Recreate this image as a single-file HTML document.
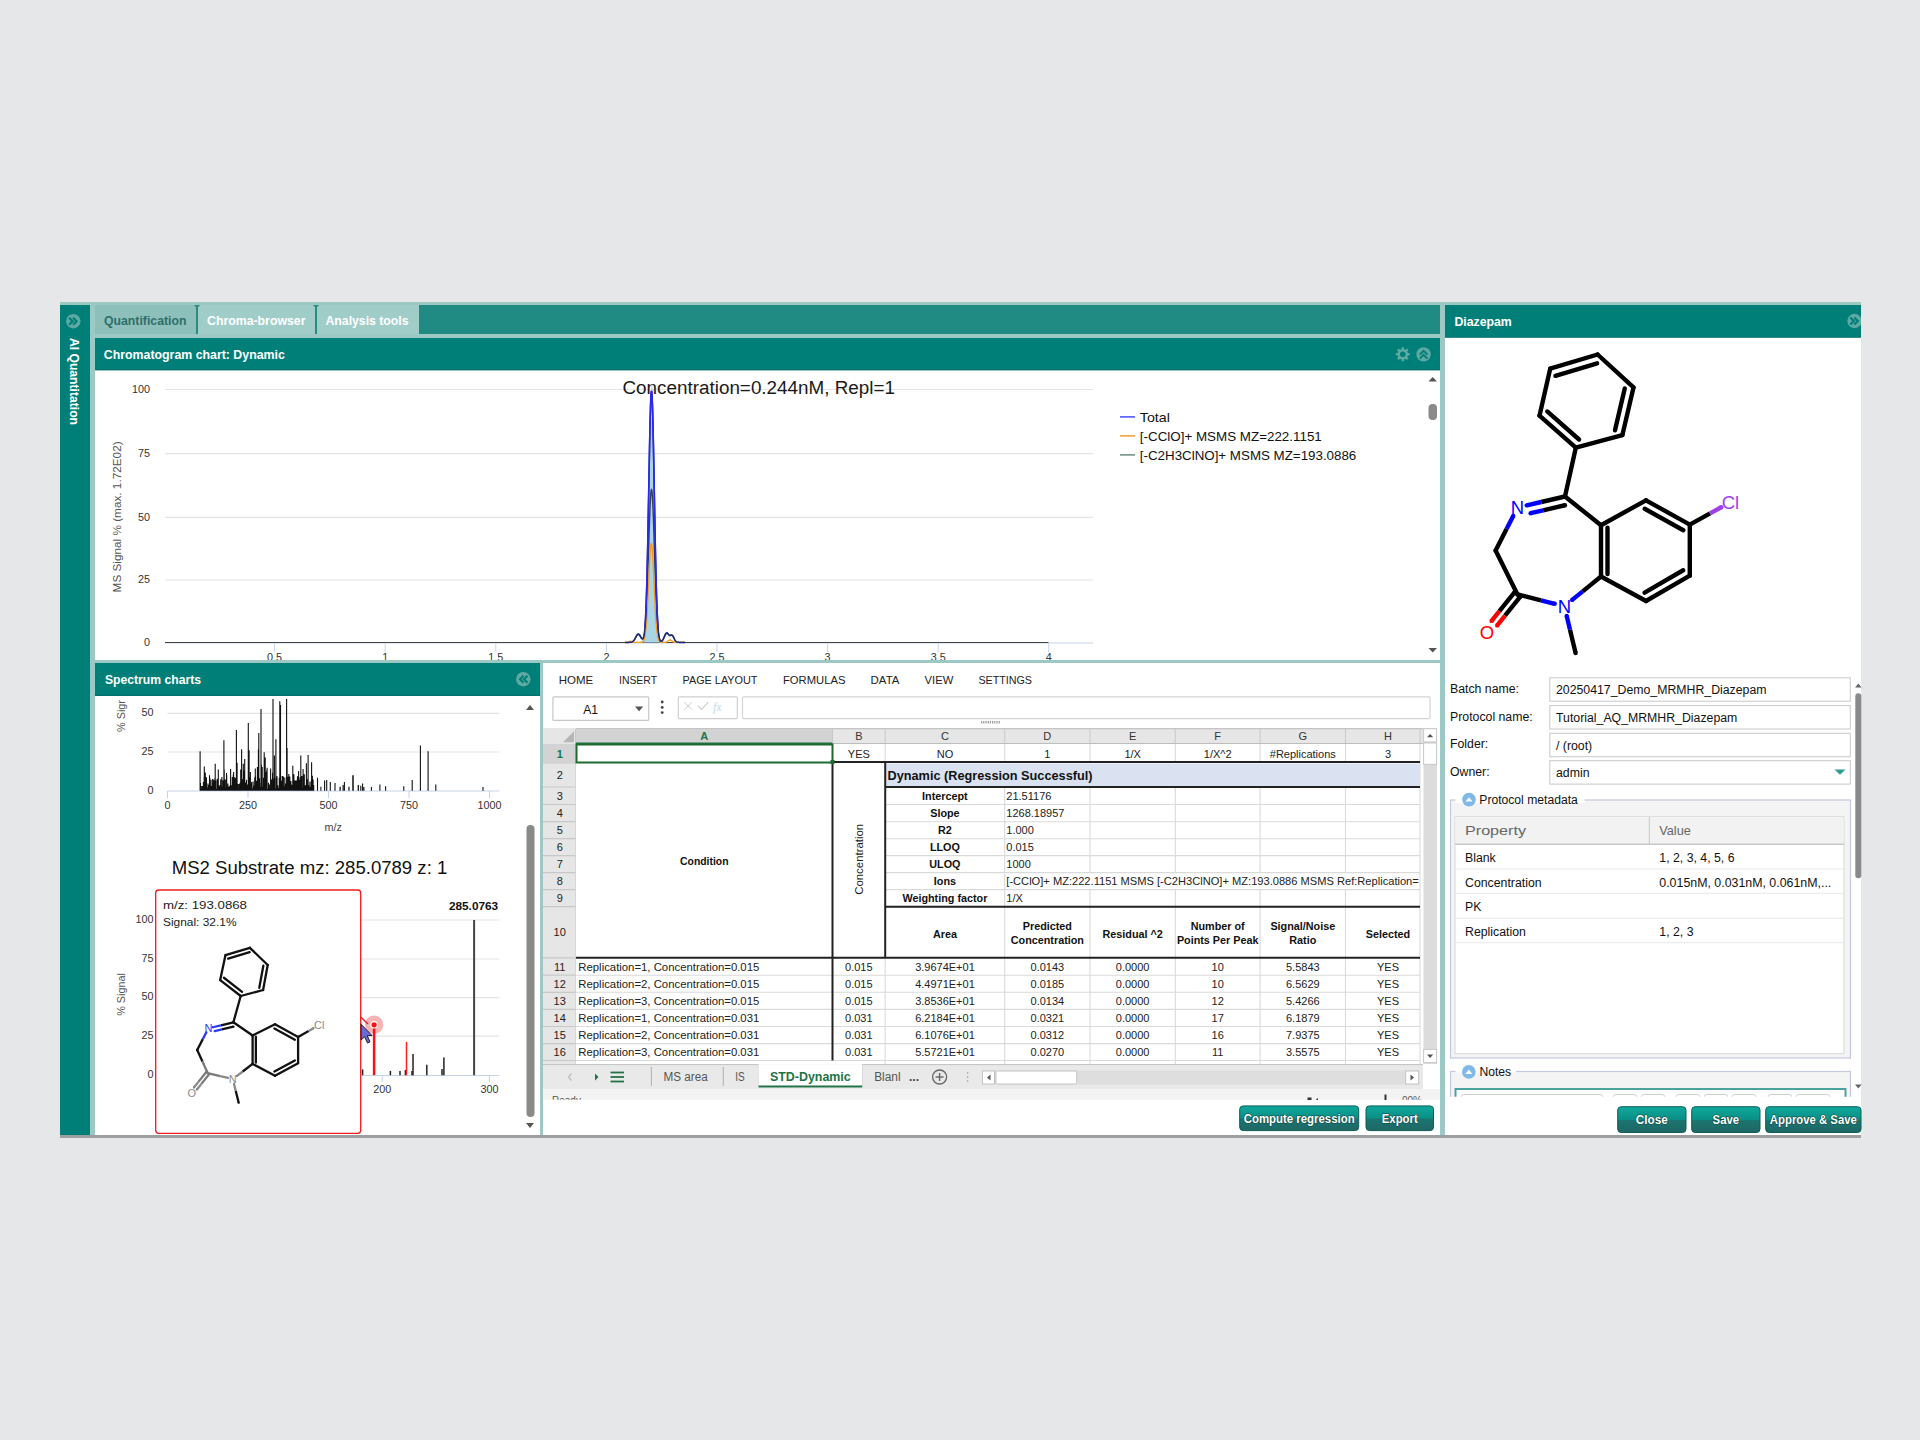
<!DOCTYPE html>
<html><head><meta charset="utf-8">
<style>
*{margin:0;padding:0;box-sizing:border-box}
html,body{width:1920px;height:1440px;overflow:hidden;background:#e6e7e9;font-family:"Liberation Sans",sans-serif}
svg{position:absolute;left:0;top:0}
</style></head><body>
<svg width="1920" height="1440" viewBox="0 0 1920 1440" font-family="Liberation Sans, sans-serif"><rect x="60" y="1135" width="1801" height="3" fill="#9d9ea0" />
<rect x="60" y="302" width="1801" height="833" fill="#9dc9c5" />
<rect x="60" y="305" width="30" height="830" fill="#007f79" />
<circle cx="73.3" cy="321.2" r="7.2" fill="#5fa9a3" stroke="none" stroke-width="1" />
<path d="M69.1,317.7 L72.6,321.2 L69.1,324.7 M73.1,317.7 L76.6,321.2 L73.1,324.7" stroke="#007f79" stroke-width="2.2" fill="none" />
<text x="0" y="0" font-size="12.3" fill="#fff" font-weight="bold" textLength="87" lengthAdjust="spacingAndGlyphs" transform="translate(69.5,338) rotate(90)">AI Quantitation</text>
<rect x="95" y="305" width="1345" height="29" fill="#1f8b83" />
<rect x="95" y="305" width="101" height="29" fill="#8ec0bb" />
<rect x="198" y="305" width="117" height="29" fill="#a1cdc9" />
<rect x="317" y="305" width="102" height="29" fill="#a1cdc9" />
<rect x="196" y="305" width="2" height="29" fill="#2b8a83" />
<rect x="315" y="305" width="2" height="29" fill="#2b8a83" />
<rect x="194.5" y="305" width="5" height="1.5" fill="#2b8a83" />
<rect x="313.5" y="305" width="5" height="1.5" fill="#2b8a83" />
<text x="104" y="325" font-size="12.3" fill="#2c6f6a" font-weight="bold" textLength="82.5" lengthAdjust="spacingAndGlyphs" >Quantification</text>
<text x="207" y="325" font-size="12.3" fill="#fff" font-weight="bold" textLength="98.5" lengthAdjust="spacingAndGlyphs" >Chroma-browser</text>
<text x="325.5" y="325" font-size="12.3" fill="#fff" font-weight="bold" textLength="83" lengthAdjust="spacingAndGlyphs" >Analysis tools</text>
<rect x="95" y="338" width="1345" height="32.5" fill="#007f79" />
<line x1="95" y1="369.8" x2="1440" y2="369.8" stroke="#006b65" stroke-width="1" />
<text x="103.8" y="358.5" font-size="12.3" fill="#fff" font-weight="bold" textLength="181" lengthAdjust="spacingAndGlyphs" >Chromatogram chart: Dynamic</text>
<line x1="1405.8" y1="354.2" x2="1409.8" y2="354.2" stroke="#5fa9a3" stroke-width="2.3" />
<line x1="1404.92" y1="356.321" x2="1407.75" y2="359.15" stroke="#5fa9a3" stroke-width="2.3" />
<line x1="1402.8" y1="357.2" x2="1402.8" y2="361.2" stroke="#5fa9a3" stroke-width="2.3" />
<line x1="1400.68" y1="356.321" x2="1397.85" y2="359.15" stroke="#5fa9a3" stroke-width="2.3" />
<line x1="1399.8" y1="354.2" x2="1395.8" y2="354.2" stroke="#5fa9a3" stroke-width="2.3" />
<line x1="1400.68" y1="352.079" x2="1397.85" y2="349.25" stroke="#5fa9a3" stroke-width="2.3" />
<line x1="1402.8" y1="351.2" x2="1402.8" y2="347.2" stroke="#5fa9a3" stroke-width="2.3" />
<line x1="1404.92" y1="352.079" x2="1407.75" y2="349.25" stroke="#5fa9a3" stroke-width="2.3" />
<circle cx="1402.8" cy="354.2" r="5.3" fill="#5fa9a3" stroke="none" stroke-width="1" />
<circle cx="1402.8" cy="354.2" r="2.8" fill="#007f79" stroke="none" stroke-width="1" />
<circle cx="1423.6" cy="354.4" r="7.2" fill="#5fa9a3" stroke="none" stroke-width="1" />
<path d="M1419.8,354.59999999999997 L1423.6,350.79999999999995 L1427.3999999999999,354.59999999999997 M1419.8,358.59999999999997 L1423.6,354.79999999999995 L1427.3999999999999,358.59999999999997" stroke="#007f79" stroke-width="2" fill="none" />
<rect x="95" y="370.5" width="1345" height="289.5" fill="#fff" />
<line x1="165" y1="389.5" x2="1093" y2="389.5" stroke="#e4e4e4" stroke-width="1.2" />
<text x="150" y="392.7" font-size="10.8" fill="#333" text-anchor="end" >100</text>
<line x1="165" y1="453.6" x2="1093" y2="453.6" stroke="#e4e4e4" stroke-width="1.2" />
<text x="150" y="456.8" font-size="10.8" fill="#333" text-anchor="end" >75</text>
<line x1="165" y1="517.3" x2="1093" y2="517.3" stroke="#e4e4e4" stroke-width="1.2" />
<text x="150" y="520.5" font-size="10.8" fill="#333" text-anchor="end" >50</text>
<line x1="165" y1="580" x2="1093" y2="580" stroke="#e4e4e4" stroke-width="1.2" />
<text x="150" y="583.2" font-size="10.8" fill="#333" text-anchor="end" >25</text>
<text x="150" y="645.7" font-size="10.8" fill="#333" text-anchor="end" >0</text>
<text x="0" y="0" font-size="10.8" fill="#555" text-anchor="middle" textLength="151" lengthAdjust="spacingAndGlyphs" transform="translate(121.3,516.9) rotate(-90)">MS Signal % (max. 1.72E02)</text>
<line x1="165" y1="643" x2="1093" y2="643" stroke="#c5d3ea" stroke-width="1" />
<line x1="165" y1="642.5" x2="1048.5" y2="642.5" stroke="#444" stroke-width="1.2" />
<clipPath id="chclip"><rect x="95" y="370.5" width="1345" height="289.5"/></clipPath>
<line x1="274.6" y1="643.5" x2="274.6" y2="652" stroke="#c5d3ea" stroke-width="1" />
<text x="274.6" y="660.6" font-size="10.8" fill="#333" text-anchor="middle" clip-path="url(#chclip)">0.5</text>
<line x1="385.2" y1="643.5" x2="385.2" y2="652" stroke="#c5d3ea" stroke-width="1" />
<text x="385.2" y="660.6" font-size="10.8" fill="#333" text-anchor="middle" clip-path="url(#chclip)">1</text>
<line x1="495.8" y1="643.5" x2="495.8" y2="652" stroke="#c5d3ea" stroke-width="1" />
<text x="495.8" y="660.6" font-size="10.8" fill="#333" text-anchor="middle" clip-path="url(#chclip)">1.5</text>
<line x1="606.4" y1="643.5" x2="606.4" y2="652" stroke="#c5d3ea" stroke-width="1" />
<text x="606.4" y="660.6" font-size="10.8" fill="#333" text-anchor="middle" clip-path="url(#chclip)">2</text>
<line x1="717" y1="643.5" x2="717" y2="652" stroke="#c5d3ea" stroke-width="1" />
<text x="717" y="660.6" font-size="10.8" fill="#333" text-anchor="middle" clip-path="url(#chclip)">2.5</text>
<line x1="827.6" y1="643.5" x2="827.6" y2="652" stroke="#c5d3ea" stroke-width="1" />
<text x="827.6" y="660.6" font-size="10.8" fill="#333" text-anchor="middle" clip-path="url(#chclip)">3</text>
<line x1="938.2" y1="643.5" x2="938.2" y2="652" stroke="#c5d3ea" stroke-width="1" />
<text x="938.2" y="660.6" font-size="10.8" fill="#333" text-anchor="middle" clip-path="url(#chclip)">3.5</text>
<line x1="1048.8" y1="643.5" x2="1048.8" y2="652" stroke="#c5d3ea" stroke-width="1" />
<text x="1048.8" y="660.6" font-size="10.8" fill="#333" text-anchor="middle" clip-path="url(#chclip)">4</text>
<text x="622.5" y="394.2" font-size="18" fill="#1a1a1a" textLength="272.5" lengthAdjust="spacingAndGlyphs" >Concentration=0.244nM, Repl=1</text>
<path d="M640.00,641.65 L640.50,641.49 L641.00,641.28 L641.50,641.03 L642.00,640.71 L642.50,640.28 L643.00,639.67 L643.50,638.77 L644.00,637.41 L644.50,635.31 L645.00,632.12 L645.50,627.35 L646.00,620.41 L646.50,610.65 L647.00,597.45 L647.50,580.32 L648.00,559.09 L648.50,534.03 L649.00,506.00 L649.50,476.46 L650.00,447.45 L650.50,421.33 L651.00,400.50 L651.50,387.05 L652.00,382.40 L652.50,387.05 L653.00,400.50 L653.50,421.33 L654.00,447.45 L654.50,476.46 L655.00,506.00 L655.50,534.03 L656.00,559.09 L656.50,580.32 L657.00,597.45 L657.50,610.65 L658.00,620.41 L658.50,627.35 L659.00,632.12 L659.50,635.31 L660.00,637.41 L660.50,638.77 L661.00,639.67 L661.50,640.28 L662.00,640.71 L662.50,641.03 L663.00,641.28 L663.50,641.49 L664.00,641.65 L664,642.4 L640,642.4 Z" stroke="none" stroke-width="1" fill="#a9d6e4" />
<path d="M625.00,642.40 L625.50,642.40 L626.00,642.40 L626.50,642.40 L627.00,642.40 L627.50,642.40 L628.00,642.40 L628.50,642.39 L629.00,642.39 L629.50,642.37 L630.00,642.35 L630.50,642.31 L631.00,642.24 L631.50,642.14 L632.00,641.98 L632.50,641.74 L633.00,641.40 L633.50,640.94 L634.00,640.36 L634.50,639.65 L635.00,638.82 L635.50,637.92 L636.00,636.99 L636.50,636.10 L637.00,635.34 L637.50,634.77 L638.00,634.45 L638.50,634.42 L639.00,634.67 L639.50,635.18 L640.00,635.88 L640.50,636.69 L641.00,637.52 L641.50,638.25 L642.00,638.78 L642.50,638.99 L643.00,638.75 L643.50,637.90 L644.00,636.26 L644.50,633.60 L645.00,629.67 L645.50,624.18 L646.00,616.90 L646.50,607.65 L647.00,596.35 L647.50,583.13 L648.00,568.34 L648.50,552.56 L649.00,536.61 L649.50,521.47 L650.00,508.21 L650.50,497.85 L651.00,491.26 L651.50,489.00 L652.00,491.26 L652.50,497.85 L653.00,508.21 L653.50,521.47 L654.00,536.61 L654.50,552.57 L655.00,568.35 L655.50,583.15 L656.00,596.38 L656.50,607.70 L657.00,617.00 L657.50,624.35 L658.00,629.94 L658.50,634.04 L659.00,636.93 L659.50,638.89 L660.00,640.13 L660.50,640.84 L661.00,641.15 L661.50,641.14 L662.00,640.86 L662.50,640.34 L663.00,639.60 L663.50,638.67 L664.00,637.61 L664.50,636.48 L665.00,635.39 L665.50,634.44 L666.00,633.74 L666.50,633.36 L667.00,633.32 L667.50,633.58 L668.00,634.06 L668.50,634.63 L669.00,635.14 L669.50,635.47 L670.00,635.58 L670.50,635.47 L671.00,635.27 L671.50,635.11 L672.00,635.15 L672.50,635.50 L673.00,636.16 L673.50,637.09 L674.00,638.16 L674.50,639.23 L675.00,640.18 L675.50,640.95 L676.00,641.52 L676.50,641.90 L677.00,642.13 L677.50,642.27 L678.00,642.34 L678.50,642.37 L679.00,642.39 L679.50,642.40 L680.00,642.40 L680.50,642.40 L681.00,642.40 L681.50,642.40 L682.00,642.40 L682.50,642.40 L683.00,642.40 L683.50,642.40 L684.00,642.40 L684.50,642.40 L685.00,642.40" stroke="#33405a" stroke-width="1.4" fill="none" />
<path d="M625.00,642.40 L625.50,642.40 L626.00,642.40 L626.50,642.39 L627.00,642.37 L627.50,642.32 L628.00,642.21 L628.50,642.03 L629.00,641.78 L629.50,641.51 L630.00,641.29 L630.50,641.20 L631.00,641.29 L631.50,641.51 L632.00,641.78 L632.50,642.03 L633.00,642.21 L633.50,642.32 L634.00,642.37 L634.50,642.39 L635.00,642.40 L635.50,642.40 L636.00,642.40 L636.50,642.40 L637.00,642.40 L637.50,642.40 L638.00,642.40 L638.50,642.40 L639.00,642.40 L639.50,642.39 L640.00,642.38 L640.50,642.37 L641.00,642.33 L641.50,642.26 L642.00,642.14 L642.50,641.91 L643.00,641.52 L643.50,640.87 L644.00,639.84 L644.50,638.25 L645.00,635.89 L645.50,632.55 L646.00,627.98 L646.50,622.01 L647.00,614.55 L647.50,605.63 L648.00,595.49 L648.50,584.58 L649.00,573.52 L649.50,563.13 L650.00,554.24 L650.50,547.65 L651.00,544.01 L651.50,543.67 L652.00,546.67 L652.50,552.71 L653.00,561.20 L653.50,571.37 L654.00,582.35 L654.50,593.35 L655.00,603.69 L655.50,612.87 L656.00,620.64 L656.50,626.90 L657.00,631.74 L657.50,635.31 L658.00,637.84 L658.50,639.57 L659.00,640.70 L659.50,641.42 L660.00,641.85 L660.50,642.10 L661.00,642.24 L661.50,642.32 L662.00,642.36 L662.50,642.38 L663.00,642.39 L663.50,642.39 L664.00,642.39 L664.50,642.38 L665.00,642.35 L665.50,642.29 L666.00,642.19 L666.50,642.02 L667.00,641.78 L667.50,641.45 L668.00,641.05 L668.50,640.63 L669.00,640.26 L669.50,639.99 L670.00,639.90 L670.50,639.99 L671.00,640.26 L671.50,640.63 L672.00,641.05 L672.50,641.45 L673.00,641.78 L673.50,642.02 L674.00,642.19 L674.50,642.29 L675.00,642.35 L675.50,642.38 L676.00,642.39 L676.50,642.40 L677.00,642.40 L677.50,642.40 L678.00,642.40 L678.50,642.40 L679.00,642.40 L679.50,642.40 L680.00,642.40 L680.50,642.40 L681.00,642.40 L681.50,642.40 L682.00,642.40 L682.50,642.40 L683.00,642.40 L683.50,642.40 L684.00,642.40 L684.50,642.40 L685.00,642.40" stroke="#f59a1e" stroke-width="1.4" fill="none" />
<path d="M625.00,642.40 L625.50,642.40 L626.00,642.40 L626.50,642.40 L627.00,642.40 L627.50,642.40 L628.00,642.40 L628.50,642.39 L629.00,642.39 L629.50,642.37 L630.00,642.35 L630.50,642.31 L631.00,642.23 L631.50,642.12 L632.00,641.95 L632.50,641.69 L633.00,641.34 L633.50,640.85 L634.00,640.23 L634.50,639.48 L635.00,638.60 L635.50,637.64 L636.00,636.65 L636.50,635.71 L637.00,634.90 L637.50,634.29 L638.00,633.95 L638.50,633.92 L639.00,634.19 L639.50,634.74 L640.00,635.50 L640.50,636.37 L641.00,637.27 L641.50,638.08 L642.00,638.67 L642.50,638.91 L643.00,638.62 L643.50,637.59 L644.00,635.53 L644.50,632.05 L645.00,626.70 L645.50,618.94 L646.00,608.26 L646.50,594.18 L647.00,576.44 L647.50,555.06 L648.00,530.50 L648.50,503.68 L649.00,476.03 L649.50,449.34 L650.00,425.66 L650.50,406.99 L651.00,395.02 L651.50,390.90 L652.00,395.02 L652.50,406.99 L653.00,425.66 L653.50,449.34 L654.00,476.03 L654.50,503.69 L655.00,530.51 L655.50,555.08 L656.00,576.47 L656.50,594.24 L657.00,608.36 L657.50,619.12 L658.00,626.99 L658.50,632.52 L659.00,636.24 L659.50,638.64 L660.00,640.09 L660.50,640.87 L661.00,641.19 L661.50,641.15 L662.00,640.83 L662.50,640.26 L663.00,639.47 L663.50,638.48 L664.00,637.35 L664.50,636.15 L665.00,635.00 L665.50,634.00 L666.00,633.26 L666.50,632.86 L667.00,632.82 L667.50,633.11 L668.00,633.63 L668.50,634.25 L669.00,634.82 L669.50,635.22 L670.00,635.38 L670.50,635.33 L671.00,635.17 L671.50,635.04 L672.00,635.11 L672.50,635.47 L673.00,636.15 L673.50,637.08 L674.00,638.16 L674.50,639.23 L675.00,640.18 L675.50,640.95 L676.00,641.52 L676.50,641.90 L677.00,642.13 L677.50,642.27 L678.00,642.34 L678.50,642.37 L679.00,642.39 L679.50,642.40 L680.00,642.40 L680.50,642.40 L681.00,642.40 L681.50,642.40 L682.00,642.40 L682.50,642.40 L683.00,642.40 L683.50,642.40 L684.00,642.40 L684.50,642.40 L685.00,642.40" stroke="#1c2a78" stroke-width="1.5" fill="none" />
<path d="M645.00,626.70 L645.25,623.15 L645.50,618.94 L645.75,614.00 L646.00,608.26 L646.25,601.67 L646.50,594.18 L646.75,585.77 L647.00,576.44 L647.25,566.19 L647.50,555.06 L647.75,543.13 L648.00,530.50 L648.25,517.30 L648.50,503.68 L648.75,489.85 L649.00,476.03 L649.25,462.44 L649.50,449.34 L649.75,437.00 L650.00,425.66 L650.25,415.58 L650.50,406.99 L650.75,400.08 L651.00,395.02 L651.25,391.94 L651.50,390.90 L651.75,391.94 L652.00,395.02 L652.25,400.08 L652.50,406.99 L652.75,415.58 L653.00,425.66 L653.25,437.00 L653.50,449.34 L653.75,462.44 L654.00,476.03 L654.25,489.86 L654.50,503.69 L654.75,517.30 L655.00,530.51 L655.25,543.15 L655.50,555.08 L655.75,566.21 L656.00,576.47 L656.25,585.82 L656.50,594.24 L656.75,601.74 L657.00,608.36 L657.25,614.13 L657.50,619.12 L657.75,623.38 L658.00,626.99" stroke="#2828f0" stroke-width="1.6" fill="none" />
<line x1="1120" y1="416.9" x2="1135" y2="416.9" stroke="#4a4aff" stroke-width="1.5" />
<text x="1139.8" y="421.9" font-size="13" fill="#111" textLength="30" lengthAdjust="spacingAndGlyphs" >Total</text>
<line x1="1120" y1="435.9" x2="1135" y2="435.9" stroke="#f5a030" stroke-width="1.5" />
<text x="1139.8" y="440.9" font-size="13" fill="#111" textLength="182" lengthAdjust="spacingAndGlyphs" >[-CClO]+ MSMS MZ=222.1151</text>
<line x1="1120" y1="454.9" x2="1135" y2="454.9" stroke="#6c8a84" stroke-width="1.5" />
<text x="1139.8" y="459.9" font-size="13" fill="#111" textLength="216.5" lengthAdjust="spacingAndGlyphs" >[-C2H3ClNO]+ MSMS MZ=193.0886</text>
<path d="M1428.5,381.5 L1432.7,377 L1437,381.5 Z" stroke="none" stroke-width="1" fill="#555" />
<rect x="1428.5" y="404" width="8.5" height="16" fill="#8a8a8a" rx="4"/>
<path d="M1428.5,648 L1432.7,652.5 L1437,648 Z" stroke="none" stroke-width="1" fill="#555" />
<rect x="95" y="663" width="445" height="33" fill="#007f79" />
<line x1="95" y1="695.3" x2="540" y2="695.3" stroke="#006b65" stroke-width="1" />
<text x="105" y="684" font-size="12.3" fill="#fff" font-weight="bold" textLength="96" lengthAdjust="spacingAndGlyphs" >Spectrum charts</text>
<circle cx="523.3" cy="679.2" r="7.2" fill="#5fa9a3" stroke="none" stroke-width="1" />
<path d="M527.5,675.7 L524.0,679.2 L527.5,682.7 M523.5,675.7 L520.0,679.2 L523.5,682.7" stroke="#007f79" stroke-width="2.2" fill="none" />
<rect x="95" y="696" width="445" height="439" fill="#fff" />
<clipPath id="spclip"><rect x="95" y="696" width="445" height="439"/></clipPath>
<line x1="167.5" y1="713.3" x2="499.3" y2="713.3" stroke="#e4e4e4" stroke-width="1.2" />
<text x="153.5" y="716.3" font-size="10.8" fill="#333" text-anchor="end" >50</text>
<line x1="167.5" y1="752" x2="499.3" y2="752" stroke="#e4e4e4" stroke-width="1.2" />
<text x="153.5" y="755" font-size="10.8" fill="#333" text-anchor="end" >25</text>
<text x="153.5" y="793.7" font-size="10.8" fill="#333" text-anchor="end" >0</text>
<line x1="167.5" y1="791" x2="499.3" y2="791" stroke="#c5d3ea" stroke-width="1.2" />
<line x1="167.5" y1="791" x2="167.5" y2="798" stroke="#c5d3ea" stroke-width="1" />
<text x="167.5" y="809" font-size="10.8" fill="#333" text-anchor="middle" >0</text>
<line x1="248" y1="791" x2="248" y2="798" stroke="#c5d3ea" stroke-width="1" />
<text x="248" y="809" font-size="10.8" fill="#333" text-anchor="middle" >250</text>
<line x1="328.5" y1="791" x2="328.5" y2="798" stroke="#c5d3ea" stroke-width="1" />
<text x="328.5" y="809" font-size="10.8" fill="#333" text-anchor="middle" >500</text>
<line x1="409" y1="791" x2="409" y2="798" stroke="#c5d3ea" stroke-width="1" />
<text x="409" y="809" font-size="10.8" fill="#333" text-anchor="middle" >750</text>
<line x1="489.5" y1="791" x2="489.5" y2="798" stroke="#c5d3ea" stroke-width="1" />
<text x="489.5" y="809" font-size="10.8" fill="#333" text-anchor="middle" >1000</text>
<text x="333.3" y="830.5" font-size="10.8" fill="#444" text-anchor="middle" >m/z</text>
<text x="0" y="0" font-size="10.8" fill="#555" text-anchor="middle" transform="translate(124.5,716) rotate(-90)">% Sigr</text>
<path d="M200.1,790.7 V751.3 M204.3,790.7 V766.4 M205.3,790.7 V772.6 M206.4,790.7 V777.3 M209.5,790.7 V775.2 M212.6,790.7 V778.9 M215.2,790.7 V763.8 M218.3,790.7 V769.5 M223.9,790.7 V740.3 M226.7,790.7 V775.2 M230.6,790.7 V769.0 M233.6,790.7 V772.0 M236.4,790.7 V729.9 M237.1,790.7 V762.7 M240.7,790.7 V769.5 M241.6,790.7 V749.2 M243.3,790.7 V763.8 M244.7,790.7 V759.0 M248.3,790.7 V723.1 M249.1,790.7 V750.2 M250.4,790.7 V772.0 M255.3,790.7 V768.4 M258.8,790.7 V733.0 M258.4,790.7 V749.2 M261.0,790.7 V709.0 M261.4,790.7 V764.8 M264.2,790.7 V752.3 M265.2,790.7 V757.5 M266.8,790.7 V770.0 M273.0,790.7 V699.0 M274.4,790.7 V755.4 M275.9,790.7 V739.3 M279.8,790.7 V701.2 M280.5,790.7 V704.9 M286.6,790.7 V699.0 M287.1,790.7 V748.1 M292.8,790.7 V765.8 M293.9,790.7 V774.2 M297.5,790.7 V776.2 M300.8,790.7 V755.4 M300.1,790.7 V777.3 M304.3,790.7 V774.2 M306.4,790.7 V763.2 M308.1,790.7 V754.9 M311.6,790.7 V762.2 M313.1,790.7 V779.4 M317.5,790.7 V777.8 M320.9,790.7 V786.7 M324.6,790.7 V780.4 M326.7,790.7 V779.9 M330.3,790.7 V782.0 M335.0,790.7 V783.0 M340.2,790.7 V786.7 M344.4,790.7 V782.0 M349.0,790.7 V786.7 M353.2,790.7 V775.2 M358.4,790.7 V785.0 M340.0,790.7 V787.1 M343.1,790.7 V784.9 M344.4,790.7 V782.2 M348.9,790.7 V787.1 M352.8,790.7 V775.2 M358.2,790.7 V785.3 M360.8,790.7 V785.8 M362.6,790.7 V783.6 M363.9,790.7 V787.1 M371.4,790.7 V787.1 M379.9,790.7 V784.5 M385.6,790.7 V786.2 M403.8,790.7 V786.2 M412.2,790.7 V780.0 M420.4,790.7 V745.5 M428.1,790.7 V751.2 M435.8,790.7 V784.5 M483.0,790.7 V787.1 M200.5,790.7 V783.1 M201.7,790.7 V785.9 M202.7,790.7 V786.1 M203.4,790.7 V781.9 M204.2,790.7 V776.8 M205.0,790.7 V784.2 M206.5,790.7 V780.4 M208.0,790.7 V783.5 M208.9,790.7 V785.1 M209.8,790.7 V777.7 M211.0,790.7 V779.7 M212.1,790.7 V786.0 M213.0,790.7 V779.2 M214.0,790.7 V780.3 M214.9,790.7 V778.0 M215.8,790.7 V780.4 M217.2,790.7 V778.7 M218.7,790.7 V785.4 M220.0,790.7 V785.0 M220.7,790.7 V779.3 M221.9,790.7 V777.1 M223.1,790.7 V780.2 M224.2,790.7 V769.5 M225.3,790.7 V779.4 M226.5,790.7 V772.9 M227.9,790.7 V783.6 M229.1,790.7 V786.5 M230.0,790.7 V785.4 M231.3,790.7 V785.3 M232.3,790.7 V777.1 M233.3,790.7 V774.6 M234.7,790.7 V777.2 M235.7,790.7 V778.0 M237.2,790.7 V785.0 M238.1,790.7 V784.1 M239.3,790.7 V783.8 M240.3,790.7 V782.6 M241.8,790.7 V779.1 M242.9,790.7 V779.3 M244.4,790.7 V770.6 M245.7,790.7 V782.4 M246.5,790.7 V779.7 M247.2,790.7 V784.4 M248.2,790.7 V786.1 M249.0,790.7 V785.6 M249.8,790.7 V777.1 M250.6,790.7 V783.9 M251.6,790.7 V782.1 M253.1,790.7 V781.6 M253.8,790.7 V785.6 M254.7,790.7 V777.6 M255.5,790.7 V776.2 M256.3,790.7 V780.7 M257.4,790.7 V767.1 M258.7,790.7 V783.8 M259.5,790.7 V778.2 M260.8,790.7 V783.1 M262.2,790.7 V767.0 M263.5,790.7 V777.7 M264.4,790.7 V781.0 M265.1,790.7 V786.4 M266.0,790.7 V772.1 M267.1,790.7 V767.8 M268.5,790.7 V782.7 M269.4,790.7 V784.5 M270.6,790.7 V768.5 M271.7,790.7 V779.5 M272.5,790.7 V772.7 M273.8,790.7 V778.4 M274.6,790.7 V778.0 M276.0,790.7 V776.0 M277.0,790.7 V776.3 M277.8,790.7 V785.3 M279.3,790.7 V777.8 M280.6,790.7 V775.9 M281.6,790.7 V780.7 M282.3,790.7 V776.0 M283.4,790.7 V776.4 M284.8,790.7 V777.6 M285.7,790.7 V783.5 M286.9,790.7 V783.8 M287.7,790.7 V776.7 M288.8,790.7 V774.0 M289.8,790.7 V776.6 M290.9,790.7 V780.9 M292.0,790.7 V784.7 M293.3,790.7 V784.8 M294.6,790.7 V780.6 M295.7,790.7 V780.6 M296.5,790.7 V780.5 M297.4,790.7 V778.2 M298.6,790.7 V770.9 M299.6,790.7 V780.0 M300.7,790.7 V779.1 M301.9,790.7 V775.9 M303.1,790.7 V768.9 M304.0,790.7 V774.5 M305.4,790.7 V785.2 M306.5,790.7 V785.9 M307.2,790.7 V779.3 M308.6,790.7 V785.0 M309.9,790.7 V781.8 M311.3,790.7 V780.4 M312.4,790.7 V775.7 M313.7,790.7 V784.9 M200.5,790.7 V788.2 M201.3,790.7 V788.6 M202.1,790.7 V788.2 M202.9,790.7 V787.0 M203.7,790.7 V789.1 M204.5,790.7 V787.5 M205.3,790.7 V787.9 M206.1,790.7 V789.1 M206.9,790.7 V788.2 M207.7,790.7 V787.3 M208.5,790.7 V787.7 M209.3,790.7 V789.0 M210.1,790.7 V786.2 M210.9,790.7 V786.8 M211.7,790.7 V786.3 M212.5,790.7 V788.9 M213.3,790.7 V788.4 M214.1,790.7 V789.1 M214.9,790.7 V786.9 M215.7,790.7 V788.4 M216.5,790.7 V788.8 M217.3,790.7 V787.9 M218.1,790.7 V786.5 M218.9,790.7 V786.7 M219.7,790.7 V788.4 M220.5,790.7 V788.8 M221.3,790.7 V786.4 M222.1,790.7 V787.5 M222.9,790.7 V787.1 M223.7,790.7 V788.9 M224.5,790.7 V789.0 M225.3,790.7 V787.1 M226.1,790.7 V787.9 M226.9,790.7 V789.0 M227.7,790.7 V786.4 M228.5,790.7 V787.3 M229.3,790.7 V786.8 M230.1,790.7 V788.9 M230.9,790.7 V786.6 M231.7,790.7 V789.0 M232.5,790.7 V786.6 M233.3,790.7 V787.8 M234.1,790.7 V788.2 M234.9,790.7 V787.5 M235.7,790.7 V786.4 M236.5,790.7 V788.4 M237.3,790.7 V788.8 M238.1,790.7 V787.6 M238.9,790.7 V788.5 M239.7,790.7 V788.9 M240.5,790.7 V788.7 M241.3,790.7 V789.0 M242.1,790.7 V788.6 M242.9,790.7 V788.3 M243.7,790.7 V788.3 M244.5,790.7 V786.9 M245.3,790.7 V788.3 M246.1,790.7 V787.7 M246.9,790.7 V788.7 M247.7,790.7 V788.2 M248.5,790.7 V789.1 M249.3,790.7 V788.4 M250.1,790.7 V789.2 M250.9,790.7 V787.0 M251.7,790.7 V787.5 M252.5,790.7 V788.6 M253.3,790.7 V787.8 M254.1,790.7 V786.4 M254.9,790.7 V788.9 M255.7,790.7 V786.7 M256.5,790.7 V787.9 M257.3,790.7 V787.7 M258.1,790.7 V786.7 M258.9,790.7 V788.0 M259.7,790.7 V787.7 M260.5,790.7 V787.1 M261.3,790.7 V786.3 M262.1,790.7 V788.2 M262.9,790.7 V786.7 M263.7,790.7 V787.1 M264.5,790.7 V787.3 M265.3,790.7 V788.0 M266.1,790.7 V788.2 M266.9,790.7 V789.0 M267.7,790.7 V788.8 M268.5,790.7 V789.0 M269.3,790.7 V787.0 M270.1,790.7 V788.4 M270.9,790.7 V788.7 M271.7,790.7 V788.9 M272.5,790.7 V786.7 M273.3,790.7 V786.6 M274.1,790.7 V787.2 M274.9,790.7 V788.4 M275.7,790.7 V788.5 M276.5,790.7 V788.3 M277.3,790.7 V787.8 M278.1,790.7 V788.7 M278.9,790.7 V787.9 M279.7,790.7 V788.4 M280.5,790.7 V786.3 M281.3,790.7 V786.3 M282.1,790.7 V787.6 M282.9,790.7 V788.5 M283.7,790.7 V786.3 M284.5,790.7 V788.3 M285.3,790.7 V788.1 M286.1,790.7 V789.2 M286.9,790.7 V788.1 M287.7,790.7 V787.8 M288.5,790.7 V787.7 M289.3,790.7 V788.6 M290.1,790.7 V787.7 M290.9,790.7 V789.2 M291.7,790.7 V788.4 M292.5,790.7 V788.9 M293.3,790.7 V788.0 M294.1,790.7 V789.1 M294.9,790.7 V789.1 M295.7,790.7 V788.3 M296.5,790.7 V788.5 M297.3,790.7 V787.4 M298.1,790.7 V787.6 M298.9,790.7 V786.9 M299.7,790.7 V787.2 M300.5,790.7 V787.1 M301.3,790.7 V786.6 M302.1,790.7 V788.0 M302.9,790.7 V788.2 M303.7,790.7 V786.2 M304.5,790.7 V788.8 M305.3,790.7 V787.0 M306.1,790.7 V787.3 M306.9,790.7 V789.1 M307.7,790.7 V786.7 M308.5,790.7 V786.5 M309.3,790.7 V787.3 M310.1,790.7 V787.0 M310.9,790.7 V786.8 M311.7,790.7 V788.8 M312.5,790.7 V787.6 M313.3,790.7 V787.7" stroke="#111" stroke-width="1.1" fill="none" clip-path="url(#spclip)"/>
<text x="171.7" y="873.5" font-size="18" fill="#111" textLength="275.6" lengthAdjust="spacingAndGlyphs" >MS2 Substrate mz: 285.0789 z: 1</text>
<line x1="167.5" y1="920" x2="499.3" y2="920" stroke="#e4e4e4" stroke-width="1.2" />
<text x="153.5" y="922.8" font-size="10.8" fill="#333" text-anchor="end" >100</text>
<line x1="167.5" y1="959" x2="499.3" y2="959" stroke="#e4e4e4" stroke-width="1.2" />
<text x="153.5" y="961.8" font-size="10.8" fill="#333" text-anchor="end" >75</text>
<line x1="167.5" y1="997.6" x2="499.3" y2="997.6" stroke="#e4e4e4" stroke-width="1.2" />
<text x="153.5" y="1000.4" font-size="10.8" fill="#333" text-anchor="end" >50</text>
<line x1="167.5" y1="1036.2" x2="499.3" y2="1036.2" stroke="#e4e4e4" stroke-width="1.2" />
<text x="153.5" y="1039" font-size="10.8" fill="#333" text-anchor="end" >25</text>
<text x="153.5" y="1078" font-size="10.8" fill="#333" text-anchor="end" >0</text>
<line x1="167.5" y1="1075.5" x2="499.3" y2="1075.5" stroke="#c5d3ea" stroke-width="1.2" />
<text x="0" y="0" font-size="10.8" fill="#555" text-anchor="middle" transform="translate(124.5,994.5) rotate(-90)">% Signal</text>
<line x1="382.2" y1="1075.5" x2="382.2" y2="1082" stroke="#c5d3ea" stroke-width="1" />
<text x="382.2" y="1093" font-size="10.8" fill="#333" text-anchor="middle" >200</text>
<line x1="489.4" y1="1075.5" x2="489.4" y2="1082" stroke="#c5d3ea" stroke-width="1" />
<text x="489.4" y="1093" font-size="10.8" fill="#333" text-anchor="middle" >300</text>
<line x1="474.1" y1="920" x2="474.1" y2="1075.2" stroke="#444" stroke-width="2" />
<text x="498.2" y="909.5" font-size="11" fill="#111" font-weight="bold" text-anchor="end" textLength="49.3" lengthAdjust="spacingAndGlyphs" >285.0763</text>
<line x1="413" y1="1075.2" x2="413" y2="1054" stroke="#222" stroke-width="1.5" />
<line x1="426.8" y1="1075.2" x2="426.8" y2="1064.8" stroke="#222" stroke-width="1.5" />
<line x1="443.9" y1="1075.2" x2="443.9" y2="1057.5" stroke="#222" stroke-width="1.5" />
<line x1="390.4" y1="1075.2" x2="390.4" y2="1070.9" stroke="#222" stroke-width="1.5" />
<line x1="400" y1="1075.2" x2="400" y2="1071" stroke="#222" stroke-width="1.5" />
<line x1="405.4" y1="1075.2" x2="405.4" y2="1070" stroke="#222" stroke-width="1.5" />
<line x1="412" y1="1075.2" x2="412" y2="1071" stroke="#222" stroke-width="1.5" />
<line x1="442" y1="1075.2" x2="442" y2="1069" stroke="#222" stroke-width="1.5" />
<line x1="362.6" y1="1075.2" x2="362.6" y2="1069.4" stroke="#222" stroke-width="1.5" />
<line x1="406.5" y1="1075.2" x2="406.5" y2="1041.9" stroke="#ff2020" stroke-width="1.5" />
<circle cx="374.1" cy="1024.8" r="9.2" fill="#f8b4b4" stroke="none" stroke-width="1" />
<line x1="374.1" y1="1075.2" x2="374.1" y2="1025" stroke="#ff1010" stroke-width="2.5" />
<circle cx="374.1" cy="1024.8" r="3.2" fill="#ff1010" stroke="#fff" stroke-width="1.2" />
<rect x="155.7" y="890" width="205" height="243.3" fill="#fff" rx="3" stroke="#ee1c1c" stroke-width="1.3"/>
<path d="M360.7,1017 L368,1024" stroke="#ee1c1c" stroke-width="1.3" fill="none" />
<text x="163" y="909" font-size="11" fill="#222" textLength="84" lengthAdjust="spacingAndGlyphs" >m/z: 193.0868</text>
<text x="163" y="926" font-size="11" fill="#222" textLength="73.5" lengthAdjust="spacingAndGlyphs" >Signal: 32.1%</text>
<path d="M361.1,1024.3 L361.1,1040 L364.6,1036.8 L367.5,1043 L370,1041.8 L367.2,1035.7 L372,1035.5 Z" stroke="#111" stroke-width="0.9" fill="#6a6ad8" />
<path d="M526,710 L530,705 L534,710 Z" stroke="none" stroke-width="1" fill="#555" />
<rect x="526.5" y="825" width="8" height="292" fill="#8a8a8a" rx="4"/>
<path d="M526,1123 L530,1128 L534,1123 Z" stroke="none" stroke-width="1" fill="#555" />
<line x1="249.9" y1="947.8" x2="225.5" y2="955.1" stroke="#111" stroke-width="2.3" stroke-linecap="round"/>
<line x1="225.5" y1="955.1" x2="220.2" y2="980.1" stroke="#111" stroke-width="2.3" stroke-linecap="round"/>
<line x1="220.2" y1="980.1" x2="240.7" y2="996" stroke="#111" stroke-width="2.3" stroke-linecap="round"/>
<line x1="240.7" y1="996" x2="263.1" y2="990" stroke="#111" stroke-width="2.3" stroke-linecap="round"/>
<line x1="263.1" y1="990" x2="267.7" y2="965" stroke="#111" stroke-width="2.3" stroke-linecap="round"/>
<line x1="267.7" y1="965" x2="249.9" y2="947.8" stroke="#111" stroke-width="2.3" stroke-linecap="round"/>
<line x1="252.6" y1="1035.5" x2="275" y2="1024.3" stroke="#111" stroke-width="2.3" stroke-linecap="round"/>
<line x1="275" y1="1024.3" x2="298.1" y2="1036.9" stroke="#111" stroke-width="2.3" stroke-linecap="round"/>
<line x1="298.1" y1="1036.9" x2="298.1" y2="1063.2" stroke="#111" stroke-width="2.3" stroke-linecap="round"/>
<line x1="298.1" y1="1063.2" x2="275" y2="1075.8" stroke="#111" stroke-width="2.3" stroke-linecap="round"/>
<line x1="275" y1="1075.8" x2="252.6" y2="1063.9" stroke="#111" stroke-width="2.3" stroke-linecap="round"/>
<line x1="252.6" y1="1063.9" x2="252.6" y2="1035.5" stroke="#111" stroke-width="2.3" stroke-linecap="round"/>
<line x1="240.7" y1="996" x2="233.4" y2="1022.3" stroke="#111" stroke-width="2.3" stroke-linecap="round"/>
<line x1="233.4" y1="1022.3" x2="252.6" y2="1035.5" stroke="#111" stroke-width="2.3" stroke-linecap="round"/>
<line x1="206.336" y1="1032.3" x2="202.8" y2="1039.15" stroke="#2a3cf0" stroke-width="2.3" stroke-linecap="butt"/>
<line x1="202.8" y1="1039.15" x2="197.2" y2="1050" stroke="#111" stroke-width="2.3" stroke-linecap="butt"/>
<circle cx="206.336" cy="1032.3" r="1.15" fill="#2a3cf0" stroke="none" stroke-width="1" />
<circle cx="197.2" cy="1050" r="1.15" fill="#111" stroke="none" stroke-width="1" />
<line x1="197.2" y1="1050" x2="202.45" y2="1061.55" stroke="#111" stroke-width="2.3" stroke-linecap="butt"/>
<line x1="202.45" y1="1061.55" x2="207.7" y2="1073.1" stroke="#7a7a7a" stroke-width="2.3" stroke-linecap="butt"/>
<circle cx="197.2" cy="1050" r="1.15" fill="#111" stroke="none" stroke-width="1" />
<circle cx="207.7" cy="1073.1" r="1.15" fill="#7a7a7a" stroke="none" stroke-width="1" />
<line x1="207.7" y1="1073.1" x2="220.25" y2="1076.1" stroke="#7a7a7a" stroke-width="2.3" stroke-linecap="butt"/>
<line x1="220.25" y1="1076.1" x2="227.937" y2="1077.94" stroke="#8a8a8a" stroke-width="2.3" stroke-linecap="butt"/>
<circle cx="207.7" cy="1073.1" r="1.15" fill="#7a7a7a" stroke="none" stroke-width="1" />
<circle cx="227.937" cy="1077.94" r="1.15" fill="#8a8a8a" stroke="none" stroke-width="1" />
<line x1="236.766" y1="1076.06" x2="242.7" y2="1071.5" stroke="#8a8a8a" stroke-width="2.3" stroke-linecap="butt"/>
<line x1="242.7" y1="1071.5" x2="252.6" y2="1063.9" stroke="#111" stroke-width="2.3" stroke-linecap="butt"/>
<circle cx="236.766" cy="1076.06" r="1.15" fill="#8a8a8a" stroke="none" stroke-width="1" />
<circle cx="252.6" cy="1063.9" r="1.15" fill="#111" stroke="none" stroke-width="1" />
<line x1="234.008" y1="1083.95" x2="235.75" y2="1090.95" stroke="#8a8a8a" stroke-width="2.3" stroke-linecap="butt"/>
<line x1="235.75" y1="1090.95" x2="238.7" y2="1102.8" stroke="#111" stroke-width="2.3" stroke-linecap="butt"/>
<circle cx="234.008" cy="1083.95" r="1.15" fill="#8a8a8a" stroke="none" stroke-width="1" />
<circle cx="238.7" cy="1102.8" r="1.15" fill="#111" stroke="none" stroke-width="1" />
<line x1="298.1" y1="1036.9" x2="308.65" y2="1030.95" stroke="#111" stroke-width="2.3" stroke-linecap="butt"/>
<line x1="308.65" y1="1030.95" x2="313.538" y2="1028.19" stroke="#8a8a8a" stroke-width="2.3" stroke-linecap="butt"/>
<circle cx="298.1" cy="1036.9" r="1.15" fill="#111" stroke="none" stroke-width="1" />
<circle cx="313.538" cy="1028.19" r="1.15" fill="#8a8a8a" stroke="none" stroke-width="1" />
<line x1="233.4" y1="1022.3" x2="220.9" y2="1025.3" stroke="#111" stroke-width="2.3" stroke-linecap="butt"/>
<line x1="220.9" y1="1025.3" x2="212.776" y2="1027.25" stroke="#2a3cf0" stroke-width="2.3" stroke-linecap="butt"/>
<circle cx="233.4" cy="1022.3" r="1.15" fill="#111" stroke="none" stroke-width="1" />
<circle cx="212.776" cy="1027.25" r="1.15" fill="#2a3cf0" stroke="none" stroke-width="1" />
<line x1="228.127" y1="958.646" x2="249.652" y2="952.206" stroke="#111" stroke-width="2.3" stroke-linecap="round"/>
<line x1="263.347" y1="965.724" x2="259.29" y2="987.774" stroke="#111" stroke-width="2.3" stroke-linecap="round"/>
<line x1="223.929" y1="977.74" x2="242.058" y2="991.801" stroke="#111" stroke-width="2.3" stroke-linecap="round"/>
<line x1="255.85" y1="1036.75" x2="255.85" y2="1062.65" stroke="#111" stroke-width="2.3" stroke-linecap="round"/>
<line x1="274.401" y1="1028.53" x2="294.868" y2="1039.69" stroke="#111" stroke-width="2.3" stroke-linecap="round"/>
<line x1="294.868" y1="1060.41" x2="274.401" y2="1071.57" stroke="#111" stroke-width="2.3" stroke-linecap="round"/>
<line x1="214.74" y1="1031.15" x2="221.892" y2="1029.43" stroke="#2a3cf0" stroke-width="2.3" stroke-linecap="butt"/>
<line x1="221.892" y1="1029.43" x2="233.419" y2="1026.67" stroke="#111" stroke-width="2.3" stroke-linecap="butt"/>
<circle cx="214.74" cy="1031.15" r="1.15" fill="#2a3cf0" stroke="none" stroke-width="1" />
<circle cx="233.419" cy="1026.67" r="1.15" fill="#111" stroke="none" stroke-width="1" />
<line x1="206.293" y1="1071.98" x2="198.393" y2="1081.88" stroke="#7a7a7a" stroke-width="2.3" stroke-linecap="butt"/>
<line x1="198.393" y1="1081.88" x2="193.924" y2="1087.48" stroke="#8a8a8a" stroke-width="2.3" stroke-linecap="butt"/>
<circle cx="206.293" cy="1071.98" r="1.15" fill="#7a7a7a" stroke="none" stroke-width="1" />
<circle cx="193.924" cy="1087.48" r="1.15" fill="#8a8a8a" stroke="none" stroke-width="1" />
<line x1="209.107" y1="1074.22" x2="201.207" y2="1084.12" stroke="#7a7a7a" stroke-width="2.3" stroke-linecap="butt"/>
<line x1="201.207" y1="1084.12" x2="196.737" y2="1089.72" stroke="#8a8a8a" stroke-width="2.3" stroke-linecap="butt"/>
<circle cx="209.107" cy="1074.22" r="1.15" fill="#7a7a7a" stroke="none" stroke-width="1" />
<circle cx="196.737" cy="1089.72" r="1.15" fill="#8a8a8a" stroke="none" stroke-width="1" />
<text x="208.4" y="1032.26" font-size="11" fill="#2a3cf0" text-anchor="middle" >N</text>
<text x="232.8" y="1083.06" font-size="11" fill="#8a8a8a" text-anchor="middle" >N</text>
<text x="191.9" y="1096.86" font-size="11" fill="#8a8a8a" text-anchor="middle" >O</text>
<text x="319.2" y="1028.96" font-size="11" fill="#8a8a8a" text-anchor="middle" >Cl</text>
<rect x="543" y="663" width="897" height="472" fill="#fff" />
<text x="558.7" y="683.8" font-size="11.8" fill="#222" textLength="34.5" lengthAdjust="spacingAndGlyphs" >HOME</text>
<text x="619" y="683.8" font-size="11.8" fill="#222" textLength="38" lengthAdjust="spacingAndGlyphs" >INSERT</text>
<text x="682.5" y="683.8" font-size="11.8" fill="#222" textLength="75" lengthAdjust="spacingAndGlyphs" >PAGE LAYOUT</text>
<text x="783" y="683.8" font-size="11.8" fill="#222" textLength="62.5" lengthAdjust="spacingAndGlyphs" >FORMULAS</text>
<text x="870.6" y="683.8" font-size="11.8" fill="#222" textLength="28.8" lengthAdjust="spacingAndGlyphs" >DATA</text>
<text x="924.5" y="683.8" font-size="11.8" fill="#222" textLength="28.8" lengthAdjust="spacingAndGlyphs" >VIEW</text>
<text x="978.4" y="683.8" font-size="11.8" fill="#222" textLength="53.6" lengthAdjust="spacingAndGlyphs" >SETTINGS</text>
<rect x="552.9" y="696.8" width="95.8" height="23.6" fill="#fff" rx="1" stroke="#c8c8c8" stroke-width="1.2"/>
<text x="583.2" y="714" font-size="12.5" fill="#111" textLength="14.8" lengthAdjust="spacingAndGlyphs" >A1</text>
<path d="M635,706.5 L643.2,706.5 L639.1,711.3 Z" stroke="none" stroke-width="1" fill="#555" />
<circle cx="662.2" cy="702" r="1.4" fill="#444" stroke="none" stroke-width="1" />
<circle cx="662.2" cy="707.4" r="1.4" fill="#444" stroke="none" stroke-width="1" />
<circle cx="662.2" cy="712.6" r="1.4" fill="#444" stroke="none" stroke-width="1" />
<rect x="678.3" y="696.8" width="59" height="21.8" fill="#fff" rx="1" stroke="#d0d0d0" stroke-width="1.2"/>
<path d="M684.4,702.2 L691.9,709.7 M691.9,702.2 L684.4,709.7" stroke="#cdcdcd" stroke-width="1" fill="none" />
<path d="M697.8,705.6 L701.6,709.4 L708.1,702.2" stroke="#cdcdcd" stroke-width="1.1" fill="none" />
<text x="713" y="711" font-size="12" fill="#c2d8f0" font-style="italic" font-family="Liberation Serif">fx</text>
<rect x="742.5" y="696.8" width="687.5" height="21.8" fill="#fff" rx="1" stroke="#d4d4d4" stroke-width="1.2"/>
<rect x="981" y="721" width="1.2" height="2.5" fill="#9a9a9a" />
<rect x="983.2" y="721" width="1.2" height="2.5" fill="#9a9a9a" />
<rect x="985.4" y="721" width="1.2" height="2.5" fill="#9a9a9a" />
<rect x="987.6" y="721" width="1.2" height="2.5" fill="#9a9a9a" />
<rect x="989.8" y="721" width="1.2" height="2.5" fill="#9a9a9a" />
<rect x="992" y="721" width="1.2" height="2.5" fill="#9a9a9a" />
<rect x="994.2" y="721" width="1.2" height="2.5" fill="#9a9a9a" />
<rect x="996.4" y="721" width="1.2" height="2.5" fill="#9a9a9a" />
<rect x="998.6" y="721" width="1.2" height="2.5" fill="#9a9a9a" />
<rect x="543" y="728" width="880" height="16" fill="#e6e6e6" />
<line x1="543" y1="728.6" x2="1423" y2="728.6" stroke="#c4c4c4" stroke-width="1.3" />
<rect x="576" y="729" width="256.5" height="14" fill="#d3d3d3" />
<line x1="543" y1="743.5" x2="1423" y2="743.5" stroke="#bdbdbd" stroke-width="1.2" />
<line x1="576" y1="743.2" x2="832.5" y2="743.2" stroke="#217346" stroke-width="1.6" />
<line x1="832.5" y1="729" x2="832.5" y2="743" stroke="#c8c8c8" stroke-width="1" />
<line x1="885.2" y1="729" x2="885.2" y2="743" stroke="#c8c8c8" stroke-width="1" />
<line x1="1004.7" y1="729" x2="1004.7" y2="743" stroke="#c8c8c8" stroke-width="1" />
<line x1="1090" y1="729" x2="1090" y2="743" stroke="#c8c8c8" stroke-width="1" />
<line x1="1175.3" y1="729" x2="1175.3" y2="743" stroke="#c8c8c8" stroke-width="1" />
<line x1="1260.1" y1="729" x2="1260.1" y2="743" stroke="#c8c8c8" stroke-width="1" />
<line x1="1345.5" y1="729" x2="1345.5" y2="743" stroke="#c8c8c8" stroke-width="1" />
<line x1="1420" y1="729" x2="1420" y2="743" stroke="#c8c8c8" stroke-width="1" />
<text x="704.25" y="740.2" font-size="11" fill="#217346" font-weight="bold" text-anchor="middle" >A</text>
<text x="858.85" y="740.2" font-size="11" fill="#333" text-anchor="middle" >B</text>
<text x="944.95" y="740.2" font-size="11" fill="#333" text-anchor="middle" >C</text>
<text x="1047.35" y="740.2" font-size="11" fill="#333" text-anchor="middle" >D</text>
<text x="1132.65" y="740.2" font-size="11" fill="#333" text-anchor="middle" >E</text>
<text x="1217.7" y="740.2" font-size="11" fill="#333" text-anchor="middle" >F</text>
<text x="1302.8" y="740.2" font-size="11" fill="#333" text-anchor="middle" >G</text>
<text x="1388" y="740.2" font-size="11" fill="#333" text-anchor="middle" >H</text>
<rect x="543" y="728" width="33" height="16" fill="#e6e6e6" />
<path d="M563,742.3 L574,742.3 L574,731.3 Z" stroke="none" stroke-width="1" fill="#b6b6b6" />
<line x1="575.5" y1="729" x2="575.5" y2="1064.5" stroke="#c8c8c8" stroke-width="1" />
<rect x="543" y="744" width="32.5" height="320.5" fill="#e6e6e6" />
<rect x="543" y="744" width="32.5" height="18.5" fill="#d3d3d3" />
<line x1="543" y1="763" x2="575.5" y2="763" stroke="#c8c8c8" stroke-width="1.2" />
<text x="559.7" y="757.5" font-size="11" fill="#217346" font-weight="bold" text-anchor="middle" >1</text>
<line x1="543" y1="787" x2="575.5" y2="787" stroke="#c8c8c8" stroke-width="1.2" />
<text x="559.7" y="779" font-size="11" fill="#222" text-anchor="middle" >2</text>
<line x1="543" y1="804.5" x2="575.5" y2="804.5" stroke="#c8c8c8" stroke-width="1.2" />
<text x="559.7" y="799.75" font-size="11" fill="#222" text-anchor="middle" >3</text>
<line x1="543" y1="821.7" x2="575.5" y2="821.7" stroke="#c8c8c8" stroke-width="1.2" />
<text x="559.7" y="817.1" font-size="11" fill="#222" text-anchor="middle" >4</text>
<line x1="543" y1="838.7" x2="575.5" y2="838.7" stroke="#c8c8c8" stroke-width="1.2" />
<text x="559.7" y="834.2" font-size="11" fill="#222" text-anchor="middle" >5</text>
<line x1="543" y1="855.6" x2="575.5" y2="855.6" stroke="#c8c8c8" stroke-width="1.2" />
<text x="559.7" y="851.15" font-size="11" fill="#222" text-anchor="middle" >6</text>
<line x1="543" y1="872.6" x2="575.5" y2="872.6" stroke="#c8c8c8" stroke-width="1.2" />
<text x="559.7" y="868.1" font-size="11" fill="#222" text-anchor="middle" >7</text>
<line x1="543" y1="889.6" x2="575.5" y2="889.6" stroke="#c8c8c8" stroke-width="1.2" />
<text x="559.7" y="885.1" font-size="11" fill="#222" text-anchor="middle" >8</text>
<line x1="543" y1="906.7" x2="575.5" y2="906.7" stroke="#c8c8c8" stroke-width="1.2" />
<text x="559.7" y="902.15" font-size="11" fill="#222" text-anchor="middle" >9</text>
<line x1="543" y1="957.8" x2="575.5" y2="957.8" stroke="#c8c8c8" stroke-width="1.2" />
<text x="559.7" y="936.25" font-size="11" fill="#222" text-anchor="middle" >10</text>
<line x1="543" y1="975.2" x2="575.5" y2="975.2" stroke="#c8c8c8" stroke-width="1.2" />
<text x="559.7" y="970.5" font-size="11" fill="#222" text-anchor="middle" >11</text>
<line x1="543" y1="992.3" x2="575.5" y2="992.3" stroke="#c8c8c8" stroke-width="1.2" />
<text x="559.7" y="987.75" font-size="11" fill="#222" text-anchor="middle" >12</text>
<line x1="543" y1="1009.4" x2="575.5" y2="1009.4" stroke="#c8c8c8" stroke-width="1.2" />
<text x="559.7" y="1004.85" font-size="11" fill="#222" text-anchor="middle" >13</text>
<line x1="543" y1="1026.5" x2="575.5" y2="1026.5" stroke="#c8c8c8" stroke-width="1.2" />
<text x="559.7" y="1021.95" font-size="11" fill="#222" text-anchor="middle" >14</text>
<line x1="543" y1="1043.6" x2="575.5" y2="1043.6" stroke="#c8c8c8" stroke-width="1.2" />
<text x="559.7" y="1039.05" font-size="11" fill="#222" text-anchor="middle" >15</text>
<line x1="543" y1="1060.5" x2="575.5" y2="1060.5" stroke="#c8c8c8" stroke-width="1.2" />
<text x="559.7" y="1056.05" font-size="11" fill="#222" text-anchor="middle" >16</text>
<line x1="543" y1="1077.5" x2="575.5" y2="1077.5" stroke="#c8c8c8" stroke-width="1.2" />
<clipPath id="ssclip"><rect x="543" y="744" width="880" height="320.5"/></clipPath>
<path d="M832.5,744 V763 M885.2,744 V763 M1004.7,744 V763 M1090,744 V763 M1175.3,744 V763 M1260.1,744 V763 M1345.5,744 V763 M1420,744 V763 M885.2,804.5 H1420 M885.2,821.7 H1420 M885.2,838.7 H1420 M885.2,855.6 H1420 M885.2,872.6 H1420 M885.2,889.6 H1420 M885.2,906.7 H1420 M1090,787 V804.5 M1090,804.5 V821.7 M1090,821.7 V838.7 M1090,838.7 V855.6 M1090,855.6 V872.6 M1090,889.6 V906.7 M1175.3,787 V804.5 M1175.3,804.5 V821.7 M1175.3,821.7 V838.7 M1175.3,838.7 V855.6 M1175.3,855.6 V872.6 M1175.3,889.6 V906.7 M1260.1,787 V804.5 M1260.1,804.5 V821.7 M1260.1,821.7 V838.7 M1260.1,838.7 V855.6 M1260.1,855.6 V872.6 M1260.1,889.6 V906.7 M1345.5,787 V804.5 M1345.5,804.5 V821.7 M1345.5,821.7 V838.7 M1345.5,838.7 V855.6 M1345.5,855.6 V872.6 M1345.5,889.6 V906.7 M1004.7,787 V906.7 M1004.7,906.7 V957.8 M1090,906.7 V957.8 M1175.3,906.7 V957.8 M1260.1,906.7 V957.8 M1345.5,906.7 V957.8 M576,975.2 H1420 M576,992.3 H1420 M576,1009.4 H1420 M576,1026.5 H1420 M576,1043.6 H1420 M576,1060.5 H1420 M576,1077.5 H1420 M885.2,957.8 V1064.5 M1004.7,957.8 V1064.5 M1090,957.8 V1064.5 M1175.3,957.8 V1064.5 M1260.1,957.8 V1064.5 M1345.5,957.8 V1064.5 M1420,744 V1064.5" stroke="#dadada" stroke-width="1.1" fill="none" clip-path="url(#ssclip)"/>
<rect x="885.5" y="763.5" width="534.5" height="23.5" fill="#dae2f2" />
<line x1="832.5" y1="762" x2="1420" y2="762" stroke="#222" stroke-width="2" />
<line x1="885.2" y1="787" x2="1420" y2="787" stroke="#222" stroke-width="2" />
<line x1="885.2" y1="906.7" x2="1420" y2="906.7" stroke="#222" stroke-width="2" />
<line x1="576" y1="957.8" x2="1420" y2="957.8" stroke="#222" stroke-width="2" />
<line x1="832.5" y1="763" x2="832.5" y2="1060.5" stroke="#222" stroke-width="2" />
<line x1="885.2" y1="763" x2="885.2" y2="957.8" stroke="#222" stroke-width="2" />
<rect x="576.5" y="744.5" width="256" height="18" fill="none" stroke="#1e6b30" stroke-width="2"/>
<rect x="830.5" y="760" width="4" height="4" fill="#1e6b30" />
<text x="858.85" y="758.3" font-size="11" fill="#222" text-anchor="middle" >YES</text>
<text x="944.95" y="758.3" font-size="11" fill="#222" text-anchor="middle" >NO</text>
<text x="1047.35" y="758.3" font-size="11" fill="#222" text-anchor="middle" >1</text>
<text x="1132.65" y="758.3" font-size="11" fill="#222" text-anchor="middle" >1/X</text>
<text x="1217.7" y="758.3" font-size="11" fill="#222" text-anchor="middle" >1/X^2</text>
<text x="1302.8" y="758.3" font-size="11" fill="#222" text-anchor="middle" >#Replications</text>
<text x="1388" y="758.3" font-size="11" fill="#222" text-anchor="middle" >3</text>
<text x="887.5" y="779.6" font-size="12.3" fill="#111" font-weight="bold" textLength="205" lengthAdjust="spacingAndGlyphs" >Dynamic (Regression Successful)</text>
<text x="944.9" y="799.75" font-size="10.8" fill="#111" font-weight="bold" text-anchor="middle" >Intercept</text>
<text x="1006.3" y="799.75" font-size="11" fill="#222" >21.51176</text>
<text x="944.9" y="817.1" font-size="10.8" fill="#111" font-weight="bold" text-anchor="middle" >Slope</text>
<text x="1006.3" y="817.1" font-size="11" fill="#222" >1268.18957</text>
<text x="944.9" y="834.2" font-size="10.8" fill="#111" font-weight="bold" text-anchor="middle" >R2</text>
<text x="1006.3" y="834.2" font-size="11" fill="#222" >1.000</text>
<text x="944.9" y="851.15" font-size="10.8" fill="#111" font-weight="bold" text-anchor="middle" >LLOQ</text>
<text x="1006.3" y="851.15" font-size="11" fill="#222" >0.015</text>
<text x="944.9" y="868.1" font-size="10.8" fill="#111" font-weight="bold" text-anchor="middle" >ULOQ</text>
<text x="1006.3" y="868.1" font-size="11" fill="#222" >1000</text>
<text x="944.9" y="885.1" font-size="10.8" fill="#111" font-weight="bold" text-anchor="middle" >Ions</text>
<text x="1006.3" y="885.1" font-size="11" fill="#222" textLength="412.5" lengthAdjust="spacingAndGlyphs" >[-CClO]+ MZ:222.1151 MSMS [-C2H3ClNO]+ MZ:193.0886 MSMS Ref:Replication=</text>
<text x="944.9" y="902.15" font-size="10.8" fill="#111" font-weight="bold" text-anchor="middle" >Weighting factor</text>
<text x="1006.3" y="902.15" font-size="11" fill="#222" >1/X</text>
<text x="704.3" y="864.7" font-size="10.8" fill="#111" font-weight="bold" text-anchor="middle" textLength="48.5" lengthAdjust="spacingAndGlyphs" >Condition</text>
<text x="0" y="0" font-size="11" fill="#222" text-anchor="middle" textLength="71" lengthAdjust="spacingAndGlyphs" transform="translate(862.5,859.3) rotate(-90)">Concentration</text>
<text x="944.9" y="937.6" font-size="10.8" fill="#111" font-weight="bold" text-anchor="middle" >Area</text>
<text x="1047.35" y="930.1" font-size="10.8" fill="#111" font-weight="bold" text-anchor="middle" >Predicted</text>
<text x="1047.35" y="944.4" font-size="10.8" fill="#111" font-weight="bold" text-anchor="middle" >Concentration</text>
<text x="1217.7" y="930.1" font-size="10.8" fill="#111" font-weight="bold" text-anchor="middle" >Number of</text>
<text x="1217.7" y="944.4" font-size="10.8" fill="#111" font-weight="bold" text-anchor="middle" >Points Per Peak</text>
<text x="1302.8" y="930.1" font-size="10.8" fill="#111" font-weight="bold" text-anchor="middle" >Signal/Noise</text>
<text x="1302.8" y="944.4" font-size="10.8" fill="#111" font-weight="bold" text-anchor="middle" >Ratio</text>
<text x="1132.65" y="937.6" font-size="10.8" fill="#111" font-weight="bold" text-anchor="middle" >Residual ^2</text>
<text x="1388" y="937.6" font-size="10.8" fill="#111" font-weight="bold" text-anchor="middle" >Selected</text>
<text x="578.3" y="970.7" font-size="11" fill="#222" textLength="181" lengthAdjust="spacingAndGlyphs" >Replication=1, Concentration=0.015</text>
<text x="858.85" y="970.7" font-size="11" fill="#222" text-anchor="middle" >0.015</text>
<text x="944.95" y="970.7" font-size="11" fill="#222" text-anchor="middle" >3.9674E+01</text>
<text x="1047.35" y="970.7" font-size="11" fill="#222" text-anchor="middle" >0.0143</text>
<text x="1132.65" y="970.7" font-size="11" fill="#222" text-anchor="middle" >0.0000</text>
<text x="1217.7" y="970.7" font-size="11" fill="#222" text-anchor="middle" >10</text>
<text x="1302.8" y="970.7" font-size="11" fill="#222" text-anchor="middle" >5.5843</text>
<text x="1388" y="970.7" font-size="11" fill="#222" text-anchor="middle" >YES</text>
<text x="578.3" y="987.95" font-size="11" fill="#222" textLength="181" lengthAdjust="spacingAndGlyphs" >Replication=2, Concentration=0.015</text>
<text x="858.85" y="987.95" font-size="11" fill="#222" text-anchor="middle" >0.015</text>
<text x="944.95" y="987.95" font-size="11" fill="#222" text-anchor="middle" >4.4971E+01</text>
<text x="1047.35" y="987.95" font-size="11" fill="#222" text-anchor="middle" >0.0185</text>
<text x="1132.65" y="987.95" font-size="11" fill="#222" text-anchor="middle" >0.0000</text>
<text x="1217.7" y="987.95" font-size="11" fill="#222" text-anchor="middle" >10</text>
<text x="1302.8" y="987.95" font-size="11" fill="#222" text-anchor="middle" >6.5629</text>
<text x="1388" y="987.95" font-size="11" fill="#222" text-anchor="middle" >YES</text>
<text x="578.3" y="1005.05" font-size="11" fill="#222" textLength="181" lengthAdjust="spacingAndGlyphs" >Replication=3, Concentration=0.015</text>
<text x="858.85" y="1005.05" font-size="11" fill="#222" text-anchor="middle" >0.015</text>
<text x="944.95" y="1005.05" font-size="11" fill="#222" text-anchor="middle" >3.8536E+01</text>
<text x="1047.35" y="1005.05" font-size="11" fill="#222" text-anchor="middle" >0.0134</text>
<text x="1132.65" y="1005.05" font-size="11" fill="#222" text-anchor="middle" >0.0000</text>
<text x="1217.7" y="1005.05" font-size="11" fill="#222" text-anchor="middle" >12</text>
<text x="1302.8" y="1005.05" font-size="11" fill="#222" text-anchor="middle" >5.4266</text>
<text x="1388" y="1005.05" font-size="11" fill="#222" text-anchor="middle" >YES</text>
<text x="578.3" y="1022.15" font-size="11" fill="#222" textLength="181" lengthAdjust="spacingAndGlyphs" >Replication=1, Concentration=0.031</text>
<text x="858.85" y="1022.15" font-size="11" fill="#222" text-anchor="middle" >0.031</text>
<text x="944.95" y="1022.15" font-size="11" fill="#222" text-anchor="middle" >6.2184E+01</text>
<text x="1047.35" y="1022.15" font-size="11" fill="#222" text-anchor="middle" >0.0321</text>
<text x="1132.65" y="1022.15" font-size="11" fill="#222" text-anchor="middle" >0.0000</text>
<text x="1217.7" y="1022.15" font-size="11" fill="#222" text-anchor="middle" >17</text>
<text x="1302.8" y="1022.15" font-size="11" fill="#222" text-anchor="middle" >6.1879</text>
<text x="1388" y="1022.15" font-size="11" fill="#222" text-anchor="middle" >YES</text>
<text x="578.3" y="1039.25" font-size="11" fill="#222" textLength="181" lengthAdjust="spacingAndGlyphs" >Replication=2, Concentration=0.031</text>
<text x="858.85" y="1039.25" font-size="11" fill="#222" text-anchor="middle" >0.031</text>
<text x="944.95" y="1039.25" font-size="11" fill="#222" text-anchor="middle" >6.1076E+01</text>
<text x="1047.35" y="1039.25" font-size="11" fill="#222" text-anchor="middle" >0.0312</text>
<text x="1132.65" y="1039.25" font-size="11" fill="#222" text-anchor="middle" >0.0000</text>
<text x="1217.7" y="1039.25" font-size="11" fill="#222" text-anchor="middle" >16</text>
<text x="1302.8" y="1039.25" font-size="11" fill="#222" text-anchor="middle" >7.9375</text>
<text x="1388" y="1039.25" font-size="11" fill="#222" text-anchor="middle" >YES</text>
<text x="578.3" y="1056.25" font-size="11" fill="#222" textLength="181" lengthAdjust="spacingAndGlyphs" >Replication=3, Concentration=0.031</text>
<text x="858.85" y="1056.25" font-size="11" fill="#222" text-anchor="middle" >0.031</text>
<text x="944.95" y="1056.25" font-size="11" fill="#222" text-anchor="middle" >5.5721E+01</text>
<text x="1047.35" y="1056.25" font-size="11" fill="#222" text-anchor="middle" >0.0270</text>
<text x="1132.65" y="1056.25" font-size="11" fill="#222" text-anchor="middle" >0.0000</text>
<text x="1217.7" y="1056.25" font-size="11" fill="#222" text-anchor="middle" >11</text>
<text x="1302.8" y="1056.25" font-size="11" fill="#222" text-anchor="middle" >3.5575</text>
<text x="1388" y="1056.25" font-size="11" fill="#222" text-anchor="middle" >YES</text>
<rect x="1423.5" y="728" width="13.5" height="336" fill="#dcdcdc" />
<rect x="1423.6" y="728.7" width="13" height="13.2" fill="#fff" stroke="#c8c8c8" stroke-width="1"/>
<path d="M1427,737.3 L1430.1,734 L1433.2,737.3 Z" stroke="none" stroke-width="1" fill="#555" />
<rect x="1423.6" y="743" width="13" height="21.3" fill="#fff" stroke="#c8c8c8" stroke-width="1"/>
<rect x="1423.6" y="1049.4" width="13" height="13.2" fill="#fff" stroke="#c8c8c8" stroke-width="1"/>
<path d="M1427,1054.6 L1430.1,1057.9 L1433.2,1054.6 Z" stroke="none" stroke-width="1" fill="#555" />
<rect x="543" y="1064.5" width="880" height="24.5" fill="#e9e9e9" />
<rect x="543" y="1089" width="897" height="10.7" fill="#f3f3f3" />
<path d="M571.5,1073.5 L568.5,1077 L571.5,1080.5" stroke="#bbb" stroke-width="1.2" fill="none" />
<path d="M595,1073.5 L598.5,1077 L595,1080.5 Z" stroke="none" stroke-width="1" fill="#217346" />
<line x1="610.5" y1="1072.5" x2="624" y2="1072.5" stroke="#217346" stroke-width="1.8" />
<line x1="610.5" y1="1077" x2="624" y2="1077" stroke="#217346" stroke-width="1.8" />
<line x1="610.5" y1="1081.5" x2="624" y2="1081.5" stroke="#217346" stroke-width="1.8" />
<line x1="651.4" y1="1067" x2="651.4" y2="1086" stroke="#b8b8b8" stroke-width="1.2" />
<line x1="723.3" y1="1067" x2="723.3" y2="1086" stroke="#b8b8b8" stroke-width="1.2" />
<line x1="543" y1="1064.6" x2="758.5" y2="1064.6" stroke="#c2c2c2" stroke-width="1" />
<line x1="862.2" y1="1064.6" x2="1423" y2="1064.6" stroke="#c2c2c2" stroke-width="1" />
<line x1="758.5" y1="1064.5" x2="758.5" y2="1086" stroke="#c8c8c8" stroke-width="1" />
<line x1="862.2" y1="1064.5" x2="862.2" y2="1086" stroke="#c8c8c8" stroke-width="1" />
<text x="663.4" y="1081.3" font-size="12" fill="#555" textLength="44.3" lengthAdjust="spacingAndGlyphs" >MS area</text>
<text x="735.3" y="1081.3" font-size="12" fill="#555" textLength="9.5" lengthAdjust="spacingAndGlyphs" >IS</text>
<rect x="758.5" y="1064.5" width="103.7" height="23" fill="#fff" />
<line x1="758.5" y1="1086.6" x2="862.2" y2="1086.6" stroke="#217346" stroke-width="2" />
<text x="770" y="1081.3" font-size="12.3" fill="#217346" font-weight="bold" textLength="80.7" lengthAdjust="spacingAndGlyphs" >STD-Dynamic</text>
<text x="874.2" y="1081.3" font-size="12" fill="#555" textLength="26.4" lengthAdjust="spacingAndGlyphs" >Blanl</text>
<text x="909" y="1081.3" font-size="12" fill="#444" font-weight="bold" >...</text>
<circle cx="939.6" cy="1077" r="7" fill="none" stroke="#666" stroke-width="1.3" />
<line x1="935.6" y1="1077" x2="943.6" y2="1077" stroke="#666" stroke-width="1.4" />
<line x1="939.6" y1="1073" x2="939.6" y2="1081" stroke="#666" stroke-width="1.4" />
<circle cx="967.6" cy="1073" r="0.8" fill="#999" stroke="none" stroke-width="1" />
<circle cx="967.6" cy="1077" r="0.8" fill="#999" stroke="none" stroke-width="1" />
<circle cx="967.6" cy="1081" r="0.8" fill="#999" stroke="none" stroke-width="1" />
<rect x="982" y="1070.5" width="437" height="14" fill="#dedede" />
<rect x="982.5" y="1071" width="12" height="13" fill="#fff" stroke="#c4c4c4" stroke-width="1"/>
<path d="M990.5,1074.5 L987,1077.5 L990.5,1080.5 Z" stroke="none" stroke-width="1" fill="#555" />
<rect x="996" y="1071" width="80.7" height="13" fill="#fff" rx="1.5" stroke="#c4c4c4" stroke-width="1"/>
<rect x="1405.7" y="1071" width="13" height="13" fill="#fff" stroke="#c4c4c4" stroke-width="1"/>
<path d="M1410.5,1074.5 L1414,1077.5 L1410.5,1080.5 Z" stroke="none" stroke-width="1" fill="#555" />
<text x="552" y="1104" font-size="10" fill="#555" clip-path="url(#stclip)">Ready</text>
<rect x="1307.5" y="1097.5" width="4" height="2.5" fill="#333" />
<rect x="1316.5" y="1098.5" width="1.5" height="1.5" fill="#333" />
<rect x="1384.5" y="1094.5" width="2" height="5.5" fill="#333" />
<text x="1402" y="1104" font-size="10" fill="#555" clip-path="url(#stclip)">00%</text>
<clipPath id="stclip"><rect x="543" y="1089" width="897" height="10.7"/></clipPath>
<linearGradient id="btn" x1="0" y1="0" x2="0" y2="1"><stop offset="0" stop-color="#0fa89c"/><stop offset="0.5" stop-color="#0a8f86"/><stop offset="0.52" stop-color="#1b7571"/><stop offset="1" stop-color="#1f6764"/></linearGradient>
<rect x="1239.7" y="1105.9" width="119" height="24.7" fill="url(#btn)" rx="3.5" stroke="#0d5e59" stroke-width="1"/>
<text x="1299.2" y="1122.55" font-size="12.5" fill="#fff" font-weight="bold" text-anchor="middle" textLength="111" lengthAdjust="spacingAndGlyphs" style="paint-order:stroke" stroke="#0b4a46" stroke-width="1.2">Compute regression</text>
<rect x="1366" y="1105.9" width="67.5" height="24.7" fill="url(#btn)" rx="3.5" stroke="#0d5e59" stroke-width="1"/>
<text x="1399.75" y="1122.55" font-size="12.5" fill="#fff" font-weight="bold" text-anchor="middle" textLength="36" lengthAdjust="spacingAndGlyphs" style="paint-order:stroke" stroke="#0b4a46" stroke-width="1.2">Export</text>
<rect x="1445" y="305" width="416" height="32.8" fill="#007f79" />
<line x1="1445" y1="337.3" x2="1861" y2="337.3" stroke="#006b65" stroke-width="1" />
<text x="1454.5" y="326" font-size="12.3" fill="#fff" font-weight="bold" textLength="57.3" lengthAdjust="spacingAndGlyphs" >Diazepam</text>
<clipPath id="rpclip"><rect x="1445" y="305" width="416" height="830"/></clipPath>
<g clip-path="url(#rpclip)">
<circle cx="1854.5" cy="321" r="7.2" fill="#5fa9a3" stroke="none" stroke-width="1" />
<path d="M1850.3,317.5 L1853.8,321 L1850.3,324.5 M1854.3,317.5 L1857.8,321 L1854.3,324.5" stroke="#007f79" stroke-width="2.2" fill="none" />
</g>
<rect x="1445" y="337.8" width="416" height="797.2" fill="#fff" />
<line x1="1597.6" y1="354.5" x2="1550.2" y2="368.7" stroke="#000" stroke-width="4.4" stroke-linecap="round"/>
<line x1="1550.2" y1="368.7" x2="1539.5" y2="415.7" stroke="#000" stroke-width="4.4" stroke-linecap="round"/>
<line x1="1539.5" y1="415.7" x2="1575.8" y2="447.7" stroke="#000" stroke-width="4.4" stroke-linecap="round"/>
<line x1="1575.8" y1="447.7" x2="1622.4" y2="435.1" stroke="#000" stroke-width="4.4" stroke-linecap="round"/>
<line x1="1622.4" y1="435.1" x2="1633.5" y2="387.4" stroke="#000" stroke-width="4.4" stroke-linecap="round"/>
<line x1="1633.5" y1="387.4" x2="1597.6" y2="354.5" stroke="#000" stroke-width="4.4" stroke-linecap="round"/>
<line x1="1601" y1="525.2" x2="1646" y2="500.3" stroke="#000" stroke-width="4.4" stroke-linecap="round"/>
<line x1="1646" y1="500.3" x2="1689.8" y2="524.7" stroke="#000" stroke-width="4.4" stroke-linecap="round"/>
<line x1="1689.8" y1="524.7" x2="1689.8" y2="575.7" stroke="#000" stroke-width="4.4" stroke-linecap="round"/>
<line x1="1689.8" y1="575.7" x2="1646" y2="601" stroke="#000" stroke-width="4.4" stroke-linecap="round"/>
<line x1="1646" y1="601" x2="1601" y2="576.5" stroke="#000" stroke-width="4.4" stroke-linecap="round"/>
<line x1="1601" y1="576.5" x2="1601" y2="525.2" stroke="#000" stroke-width="4.4" stroke-linecap="round"/>
<line x1="1575.8" y1="447.7" x2="1565" y2="496.5" stroke="#000" stroke-width="4.4" stroke-linecap="round"/>
<line x1="1565" y1="496.5" x2="1601" y2="525.2" stroke="#000" stroke-width="4.4" stroke-linecap="round"/>
<line x1="1513.2" y1="515.969" x2="1506.55" y2="529.05" stroke="#0000ff" stroke-width="4.4" stroke-linecap="butt"/>
<line x1="1506.55" y1="529.05" x2="1495.6" y2="550.6" stroke="#000" stroke-width="4.4" stroke-linecap="butt"/>
<circle cx="1513.2" cy="515.969" r="2.2" fill="#0000ff" stroke="none" stroke-width="1" />
<circle cx="1495.6" cy="550.6" r="2.2" fill="#000" stroke="none" stroke-width="1" />
<line x1="1495.6" y1="550.6" x2="1517.5" y2="594.4" stroke="#000" stroke-width="4.4" stroke-linecap="round"/>
<line x1="1517.5" y1="594.4" x2="1540.95" y2="600.3" stroke="#000" stroke-width="4.4" stroke-linecap="butt"/>
<line x1="1540.95" y1="600.3" x2="1554.7" y2="603.76" stroke="#0000ff" stroke-width="4.4" stroke-linecap="butt"/>
<circle cx="1517.5" cy="594.4" r="2.2" fill="#000" stroke="none" stroke-width="1" />
<circle cx="1554.7" cy="603.76" r="2.2" fill="#0000ff" stroke="none" stroke-width="1" />
<line x1="1572.17" y1="599.899" x2="1582.7" y2="591.35" stroke="#0000ff" stroke-width="4.4" stroke-linecap="butt"/>
<line x1="1582.7" y1="591.35" x2="1601" y2="576.5" stroke="#000" stroke-width="4.4" stroke-linecap="butt"/>
<circle cx="1572.17" cy="599.899" r="2.2" fill="#0000ff" stroke="none" stroke-width="1" />
<circle cx="1601" cy="576.5" r="2.2" fill="#000" stroke="none" stroke-width="1" />
<line x1="1566.72" y1="615.927" x2="1570" y2="629.65" stroke="#0000ff" stroke-width="4.4" stroke-linecap="butt"/>
<line x1="1570" y1="629.65" x2="1575.6" y2="653.1" stroke="#000" stroke-width="4.4" stroke-linecap="butt"/>
<circle cx="1566.72" cy="615.927" r="2.2" fill="#0000ff" stroke="none" stroke-width="1" />
<circle cx="1575.6" cy="653.1" r="2.2" fill="#000" stroke="none" stroke-width="1" />
<line x1="1689.8" y1="524.7" x2="1710.1" y2="513.4" stroke="#000" stroke-width="4.4" stroke-linecap="butt"/>
<line x1="1710.1" y1="513.4" x2="1721.23" y2="507.207" stroke="#a040e8" stroke-width="4.4" stroke-linecap="butt"/>
<circle cx="1689.8" cy="524.7" r="2.2" fill="#000" stroke="none" stroke-width="1" />
<circle cx="1721.23" cy="507.207" r="2.2" fill="#a040e8" stroke="none" stroke-width="1" />
<line x1="1565" y1="496.5" x2="1541.25" y2="502" stroke="#000" stroke-width="4.4" stroke-linecap="butt"/>
<line x1="1541.25" y1="502" x2="1526.76" y2="505.357" stroke="#0000ff" stroke-width="4.4" stroke-linecap="butt"/>
<circle cx="1565" cy="496.5" r="2.2" fill="#000" stroke="none" stroke-width="1" />
<circle cx="1526.76" cy="505.357" r="2.2" fill="#0000ff" stroke="none" stroke-width="1" />
<line x1="1555.46" y1="375.79" x2="1597.11" y2="363.312" stroke="#000" stroke-width="4.4" stroke-linecap="round"/>
<line x1="1624.74" y1="388.441" x2="1615" y2="430.297" stroke="#000" stroke-width="4.4" stroke-linecap="round"/>
<line x1="1547.24" y1="411.458" x2="1579.04" y2="439.49" stroke="#000" stroke-width="4.4" stroke-linecap="round"/>
<line x1="1607.5" y1="527.7" x2="1607.5" y2="574" stroke="#000" stroke-width="4.4" stroke-linecap="round"/>
<line x1="1644.73" y1="508.749" x2="1683.29" y2="530.229" stroke="#000" stroke-width="4.4" stroke-linecap="round"/>
<line x1="1683.2" y1="570.273" x2="1644.6" y2="592.572" stroke="#000" stroke-width="4.4" stroke-linecap="round"/>
<line x1="1530.62" y1="513.186" x2="1543.17" y2="510.281" stroke="#0000ff" stroke-width="4.4" stroke-linecap="butt"/>
<line x1="1543.17" y1="510.281" x2="1564.97" y2="505.232" stroke="#000" stroke-width="4.4" stroke-linecap="butt"/>
<circle cx="1530.62" cy="513.186" r="2.2" fill="#0000ff" stroke="none" stroke-width="1" />
<circle cx="1564.97" cy="505.232" r="2.2" fill="#000" stroke="none" stroke-width="1" />
<line x1="1514.69" y1="592.146" x2="1499.39" y2="611.196" stroke="#000" stroke-width="4.4" stroke-linecap="butt"/>
<line x1="1499.39" y1="611.196" x2="1491.61" y2="620.89" stroke="#ff0000" stroke-width="4.4" stroke-linecap="butt"/>
<circle cx="1514.69" cy="592.146" r="2.2" fill="#000" stroke="none" stroke-width="1" />
<circle cx="1491.61" cy="620.89" r="2.2" fill="#ff0000" stroke="none" stroke-width="1" />
<line x1="1520.31" y1="596.654" x2="1505.01" y2="615.704" stroke="#000" stroke-width="4.4" stroke-linecap="butt"/>
<line x1="1505.01" y1="615.704" x2="1497.22" y2="625.398" stroke="#ff0000" stroke-width="4.4" stroke-linecap="butt"/>
<circle cx="1520.31" cy="596.654" r="2.2" fill="#000" stroke="none" stroke-width="1" />
<circle cx="1497.22" cy="625.398" r="2.2" fill="#ff0000" stroke="none" stroke-width="1" />
<text x="1517.5" y="514.16" font-size="18.5" fill="#0000ff" text-anchor="middle" >N</text>
<text x="1564.4" y="612.86" font-size="18.5" fill="#0000ff" text-anchor="middle" >N</text>
<text x="1486.9" y="639.16" font-size="18.5" fill="#ff0000" text-anchor="middle" >O</text>
<text x="1730.4" y="508.76" font-size="18.5" fill="#a040e8" text-anchor="middle" >Cl</text>
<text x="1450" y="692.8" font-size="12.3" fill="#111" >Batch name:</text>
<rect x="1549.8" y="677.8" width="300.5" height="23.4" fill="#fff" stroke="#c8c8c8" stroke-width="1"/>
<text x="1556" y="694" font-size="12.3" fill="#111" >20250417_Demo_MRMHR_Diazepam</text>
<text x="1450" y="720.6" font-size="12.3" fill="#111" >Protocol name:</text>
<rect x="1549.8" y="705.6" width="300.5" height="23.4" fill="#fff" stroke="#c8c8c8" stroke-width="1"/>
<text x="1556" y="721.8" font-size="12.3" fill="#111" >Tutorial_AQ_MRMHR_Diazepam</text>
<text x="1450" y="748.3" font-size="12.3" fill="#111" >Folder:</text>
<rect x="1549.8" y="733.3" width="300.5" height="23.4" fill="#fff" stroke="#c8c8c8" stroke-width="1"/>
<text x="1556" y="749.5" font-size="12.3" fill="#111" >/ (root)</text>
<text x="1450" y="775.7" font-size="12.3" fill="#111" >Owner:</text>
<rect x="1549.8" y="760.7" width="300.5" height="23.4" fill="#fff" stroke="#c8c8c8" stroke-width="1"/>
<text x="1556" y="776.9" font-size="12.3" fill="#111" >admin</text>
<path d="M1834.5,769.5 L1845.5,769.5 L1840,774.7 Z" stroke="none" stroke-width="1" fill="#2a9d93" />
<rect x="1450.5" y="800" width="400" height="258" fill="#f4f4f4" stroke="#c4c8dc" stroke-width="1.2"/>
<rect x="1455.5" y="795" width="129" height="8" fill="#fff" />
<rect x="1455" y="816.7" width="389" height="237" fill="#fff" stroke="#d8d8d8" stroke-width="1"/>
<rect x="1455.5" y="817.2" width="388" height="27" fill="#f2f2f2" />
<line x1="1455" y1="844.3" x2="1844" y2="844.3" stroke="#c8c8c8" stroke-width="1.4" />
<line x1="1649.3" y1="817" x2="1649.3" y2="844" stroke="#d0d0d0" stroke-width="1.2" />
<text x="1465" y="835" font-size="12.3" fill="#666" textLength="61" lengthAdjust="spacingAndGlyphs" >Property</text>
<text x="1659.3" y="835" font-size="12.3" fill="#666" textLength="31.5" lengthAdjust="spacingAndGlyphs" >Value</text>
<circle cx="1469" cy="799.6" r="6.8" fill="#80b8e8" stroke="none" stroke-width="1" />
<path d="M1465.4,801.6 L1469,797.2 L1472.6,801.6 Z" stroke="none" stroke-width="1" fill="#fff" />
<text x="1479.3" y="803.8" font-size="12.3" fill="#111" textLength="98.5" lengthAdjust="spacingAndGlyphs" >Protocol metadata</text>
<text x="1465" y="861.6" font-size="12.3" fill="#111" >Blank</text>
<text x="1659.3" y="861.6" font-size="12.3" fill="#111" >1, 2, 3, 4, 5, 6</text>
<text x="1465" y="886.6" font-size="12.3" fill="#111" >Concentration</text>
<text x="1659.3" y="886.6" font-size="12.3" fill="#111" textLength="172" lengthAdjust="spacingAndGlyphs" >0.015nM, 0.031nM, 0.061nM,...</text>
<text x="1465" y="911" font-size="12.3" fill="#111" >PK</text>
<text x="1465" y="936" font-size="12.3" fill="#111" >Replication</text>
<text x="1659.3" y="936" font-size="12.3" fill="#111" >1, 2, 3</text>
<line x1="1455" y1="869" x2="1844" y2="869" stroke="#e8e8e8" stroke-width="1" />
<line x1="1455" y1="893.3" x2="1844" y2="893.3" stroke="#e8e8e8" stroke-width="1" />
<line x1="1455" y1="918.3" x2="1844" y2="918.3" stroke="#e8e8e8" stroke-width="1" />
<line x1="1455" y1="942.7" x2="1844" y2="942.7" stroke="#e8e8e8" stroke-width="1" />
<clipPath id="ntclip"><rect x="1445" y="1060" width="416" height="36.7"/></clipPath>
<g clip-path="url(#ntclip)">
<rect x="1450.5" y="1071.5" width="400" height="60" fill="#f4f4f4" stroke="#c4c8dc" stroke-width="1.2"/>
<rect x="1455.5" y="1066" width="60.5" height="6.5" fill="#fff" />
<rect x="1455.5" y="1089" width="390" height="40" fill="#fff" stroke="#4aa39c" stroke-width="2"/>
<rect x="1461" y="1094.5" width="142" height="12" fill="#fff" rx="3" stroke="#cfcfcf" stroke-width="1"/>
<rect x="1613" y="1094.5" width="24" height="12" fill="#fff" rx="3" stroke="#cfcfcf" stroke-width="1"/>
<rect x="1641" y="1094.5" width="24" height="12" fill="#fff" rx="3" stroke="#cfcfcf" stroke-width="1"/>
<rect x="1676" y="1094.5" width="24" height="12" fill="#fff" rx="3" stroke="#cfcfcf" stroke-width="1"/>
<rect x="1704" y="1094.5" width="24" height="12" fill="#fff" rx="3" stroke="#cfcfcf" stroke-width="1"/>
<rect x="1732" y="1094.5" width="24" height="12" fill="#fff" rx="3" stroke="#cfcfcf" stroke-width="1"/>
<rect x="1768" y="1094.5" width="24" height="12" fill="#fff" rx="3" stroke="#cfcfcf" stroke-width="1"/>
<rect x="1796" y="1094.5" width="34" height="12" fill="#fff" rx="3" stroke="#cfcfcf" stroke-width="1"/>
</g>
<circle cx="1468.8" cy="1071.9" r="6.8" fill="#80b8e8" stroke="none" stroke-width="1" />
<path d="M1465.2,1073.9 L1468.8,1069.5 L1472.3999999999999,1073.9 Z" stroke="none" stroke-width="1" fill="#fff" />
<text x="1479.4" y="1076" font-size="12.3" fill="#111" textLength="31.8" lengthAdjust="spacingAndGlyphs" >Notes</text>
<path d="M1855,687.5 L1858.3,683.5 L1861.6,687.5 Z" stroke="none" stroke-width="1" fill="#666" />
<rect x="1855.3" y="693.3" width="6" height="185" fill="#8a8a8a" rx="3"/>
<path d="M1855,1084.5 L1858.3,1088.5 L1861.6,1084.5 Z" stroke="none" stroke-width="1" fill="#666" />
<rect x="1617.7" y="1106.7" width="68.3" height="25.8" fill="url(#btn)" rx="3.5" stroke="#0d5e59" stroke-width="1"/>
<text x="1651.85" y="1123.9" font-size="12.5" fill="#fff" font-weight="bold" text-anchor="middle" textLength="32" lengthAdjust="spacingAndGlyphs" style="paint-order:stroke" stroke="#0b4a46" stroke-width="1.2">Close</text>
<rect x="1691.7" y="1106.7" width="68.3" height="25.8" fill="url(#btn)" rx="3.5" stroke="#0d5e59" stroke-width="1"/>
<text x="1725.85" y="1123.9" font-size="12.5" fill="#fff" font-weight="bold" text-anchor="middle" textLength="26.5" lengthAdjust="spacingAndGlyphs" style="paint-order:stroke" stroke="#0b4a46" stroke-width="1.2">Save</text>
<rect x="1765.7" y="1106.7" width="95.3" height="25.8" fill="url(#btn)" rx="3.5" stroke="#0d5e59" stroke-width="1"/>
<text x="1813.35" y="1123.9" font-size="12.5" fill="#fff" font-weight="bold" text-anchor="middle" textLength="87" lengthAdjust="spacingAndGlyphs" style="paint-order:stroke" stroke="#0b4a46" stroke-width="1.2">Approve &amp; Save</text></svg>
</body></html>
